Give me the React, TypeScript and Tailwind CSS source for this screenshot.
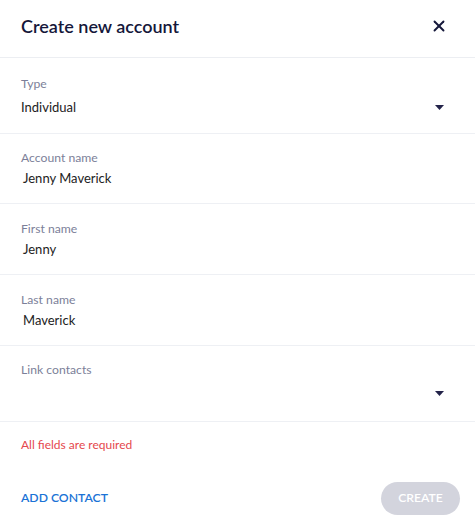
import { X } from 'lucide-react'

const Caret = () => (
	<svg width="9" height="5" viewBox="0 0 9 5" className="text-[#23234a]">
		<path d="M0 0h9L4.5 5z" fill="currentColor" />
	</svg>
)

const Field = ({ label, value, className }: { label: string; value: string; className?: string }) => (
	<div className={`border-b border-[#eef0f4] px-[21px] ${className ?? ''}`}>
		<div className="text-[12.2px] leading-4 text-[#7c7f99]">{label}</div>
		<div className="mt-1 pl-[2px] text-[13px] leading-4 text-[#222]">{value}</div>
	</div>
)

export default function App() {
	return (
		<div className="h-[526px] w-[475px] bg-white font-['Lato',sans-serif]">
			<div className="flex h-[58px] items-center justify-between border-b border-[#eceef2] pl-[21px] pr-[27px] pb-[5px]">
				<h1 className="text-[18px] font-semibold text-[#15173a]">Create new account</h1>
				<X size={18} strokeWidth={2.5} className="text-[#15173a]" />
			</div>

			<div className="border-b border-[#eef0f4] px-[21px] pt-[18px] pb-[18px]">
				<div className="text-[12.2px] leading-4 text-[#7c7f99]">Type</div>
				<div className="mt-[7px] flex items-center justify-between pr-[10px] leading-4">
					<span className="text-[13px] text-[#222]">Individual</span>
					<Caret />
				</div>
			</div>

			<Field label="Account name" value="Jenny Maverick" className="pt-4 pb-[17px]" />
			<Field label="First name" value="Jenny" className="pt-[17px] pb-[17px]" />
			<Field label="Last name" value="Maverick" className="pt-[17px] pb-[17px]" />

			<div className="border-b border-[#eef0f4] px-[21px] pt-4 pb-5">
				<div className="text-[12.2px] leading-4 text-[#7c7f99]">Link contacts</div>
				<div className="mt-[7px] flex h-4 items-center justify-end pr-[10px]">
					<Caret />
				</div>
			</div>

			<div className="px-[21px] pt-[15px] text-[12px] leading-4 text-[#e5484d]">All fields are required</div>

			<div className="mt-[29px] flex items-center justify-between pl-[21px] pr-[15px]">
				<button className="text-[12.2px] font-semibold text-[#1a73d6]">ADD CONTACT</button>
				<button className="h-[33px] w-[79px] rounded-full bg-[#d3d4dd] text-[12.2px] font-semibold text-white">
					CREATE
				</button>
			</div>
		</div>
	)
}
